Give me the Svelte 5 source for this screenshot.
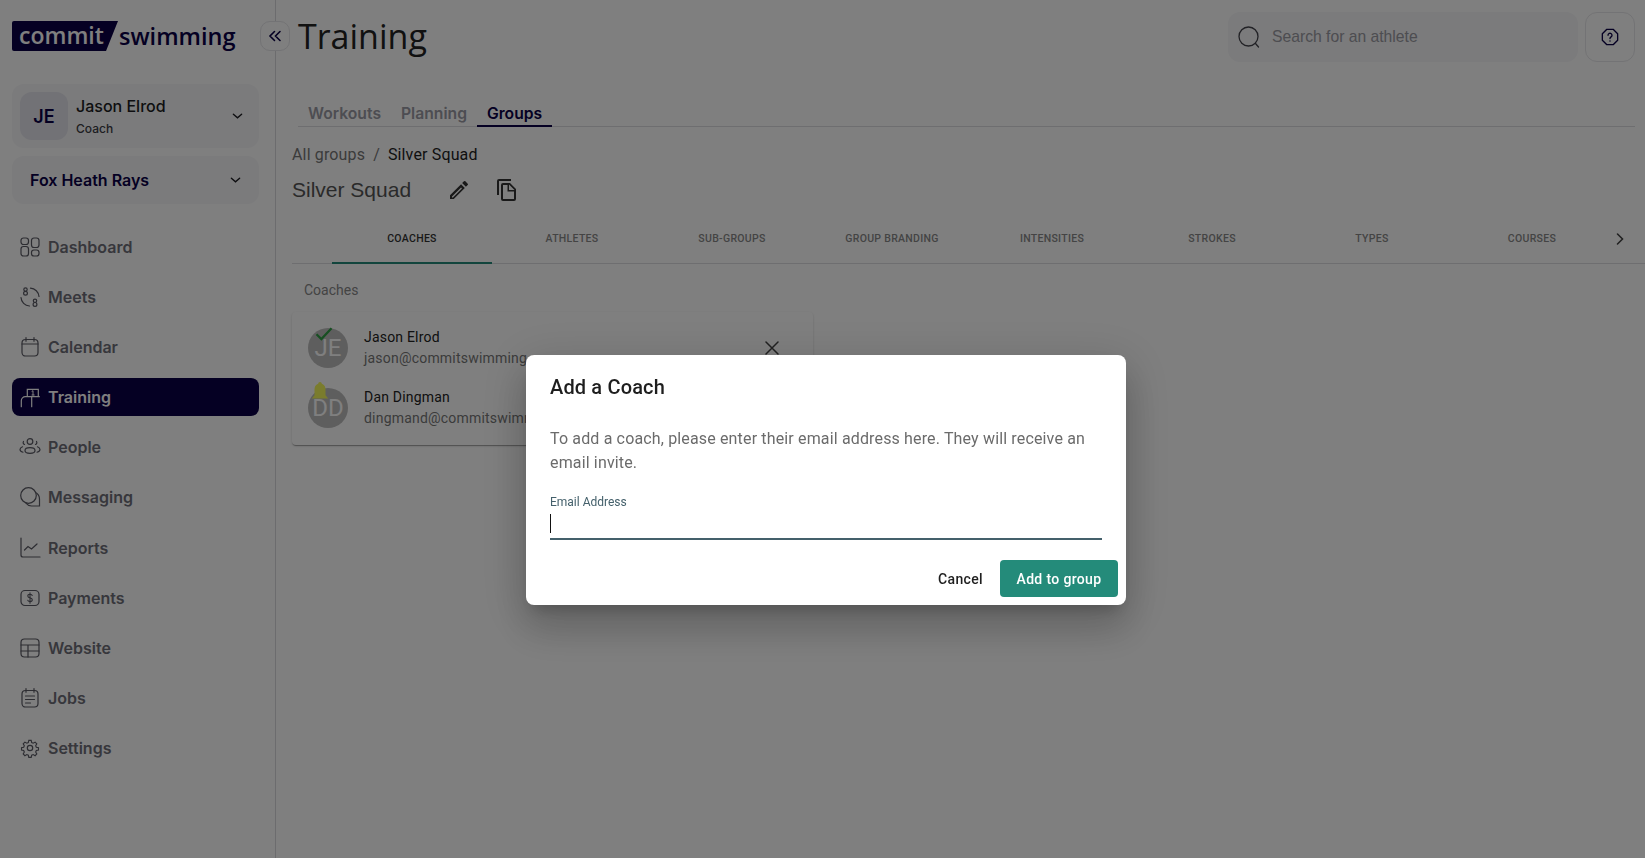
<script lang="ts">
	const icons: Record<string, string> = {
		dashboard:
			'<rect x="3" y="3" width="7.5" height="6.5" rx="2.5"/><rect x="13.5" y="3" width="7.5" height="9.5" rx="2.5"/><rect x="3" y="11.5" width="7.5" height="9.5" rx="2.5"/><rect x="13.5" y="15" width="7.5" height="6" rx="2.5"/>',
		meets:
			'<circle cx="7.5" cy="4.6" r="1.7"/><circle cx="7.5" cy="8.2" r="1.9"/><circle cx="17" cy="15.8" r="1.7"/><circle cx="17" cy="19.4" r="1.9"/><path d="M12.5 3.200a9 9 0 0 1 8.500 8.300M3 12.500a9 9 0 0 0 8.500 8.500"/>',
		calendar:
			'<rect x="4" y="4.500" width="16" height="16.500" rx="3.500"/><path d="M4 9h16M8 2.600v3.600M16 2.600v3.600"/>',
		training:
			'<path d="M9.300 11.700V4.300h11V11.700M3.300 21.700v-6a4 4 0 0 1 4-4H21.300M13.700 11.700V21.700"/><path d="M14 6.300l1-.6V10M14 10h2.200" stroke-width="1"/>',
		people:
			'<circle cx="12" cy="6.500" r="2.800"/><ellipse cx="12" cy="15.500" rx="5" ry="2.800"/><path d="M4.500 11.800C2.800 12.500 2 13.500 2 14.500s1 2.100 3 2.700M19.500 11.800c1.700.7 2.500 1.700 2.500 2.700s-1 2.100-3 2.700M6.500 9.500a2 2 0 0 1-1-3M17.500 9.500a2 2 0 0 0 1-3"/>',
		messaging:
			'<circle cx="10.500" cy="10.500" r="7.800"/><path d="M17.500 7.500A7.500 7.500 0 0 1 21.500 14v7h-8a7 7 0 0 1-5.500-2.800"/>',
		reports:
			'<path d="M3 2v17a2 2 0 0 0 2 2h17"/><path d="M6.500 14l3.500-3.500 3.500 2.500 5.500-5"/>',
		payments:
			'<rect x="3" y="4.500" width="18" height="15" rx="4"/><path d="M14.200 9.500a2.200 1.700 0 0 0-2.200-1.300c-1.300 0-2.200.7-2.200 1.800s1 1.600 2.200 1.900 2.300.8 2.300 1.900-1 1.800-2.300 1.800a2.300 1.700 0 0 1-2.300-1.400M12 6.800v10.400" stroke-width="1.100"/>',
		website:
			'<rect x="3" y="3" width="18" height="18" rx="3.500"/><path d="M3 9h18M3 15h18M10 9v12"/>',
		jobs:
			'<rect x="4" y="4.500" width="16" height="16.500" rx="3.500"/><path d="M8 2.600v3.600M16 2.600v3.600M7.500 10h9M7.500 13.500h9M7.500 17h5"/>',
		settings:
			'<circle cx="12" cy="12" r="2.700"/><path d="M10.500 2.500h3l.6 2.700 1.900.8 2.400-1.400 2.100 2.100-1.400 2.400.8 1.900 2.700.6v3l-2.700.6-.8 1.900 1.400 2.400-2.100 2.100-2.400-1.400-1.900.8-.6 2.700h-3l-.6-2.700-1.900-.8-2.400 1.400-2.100-2.100 1.400-2.400-.8-1.900-2.700-.6v-3l2.700-.6.8-1.900-1.400-2.400 2.100-2.100 2.400 1.400 1.900-.8z" transform="translate(2.400 2.400) scale(.8)" stroke-width="1.400"/>'
	};

	const nav = [
		{ label: 'Dashboard', icon: 'dashboard' },
		{ label: 'Meets', icon: 'meets' },
		{ label: 'Calendar', icon: 'calendar' },
		{ label: 'Training', icon: 'training', active: true },
		{ label: 'People', icon: 'people' },
		{ label: 'Messaging', icon: 'messaging' },
		{ label: 'Reports', icon: 'reports' },
		{ label: 'Payments', icon: 'payments' },
		{ label: 'Website', icon: 'website' },
		{ label: 'Jobs', icon: 'jobs' },
		{ label: 'Settings', icon: 'settings' }
	];

	const sections = ['Workouts', 'Planning', 'Groups'];
	const groupTabs = ['Coaches', 'Athletes', 'Sub-groups', 'Group branding', 'Intensities', 'Strokes', 'Types', 'Courses'];

	const coaches = [
		{ initials: 'JE', name: 'Jason Elrod', email: 'jason@commitswimming.com', badge: 'check' },
		{ initials: 'DD', name: 'Dan Dingman', email: 'dingmand@commitswimming.com', badge: 'bell' }
	];
</script>

<div class="app">
	<aside class="sidebar">
		<div class="logo">
			<span class="logo-box">commit</span>
			<span class="logo-word">swimming</span>
		</div>

		<button type="button" class="account">
			<span class="account-avatar">JE</span>
			<span class="account-text">
				<span class="account-name">Jason Elrod</span>
				<span class="account-role">Coach</span>
			</span>
			<svg class="chev" viewBox="0 0 12 8"><path d="M1.500 2l4.500 4 4.500-4" /></svg>
		</button>

		<button type="button" class="team">
			<span>Fox Heath Rays</span>
			<svg class="chev" viewBox="0 0 12 8"><path d="M1.500 2l4.500 4 4.500-4" /></svg>
		</button>

		<nav class="nav">
			{#each nav as item (item.label)}
				<div class="nav-item" class:active={item.active}>
					<svg class="nav-icon" viewBox="0 0 24 24">{@html icons[item.icon]}</svg>
					<span>{item.label}</span>
				</div>
			{/each}
		</nav>
	</aside>

	<main class="main">
		<button type="button" class="collapse" aria-label="Collapse">
			<svg viewBox="0 0 14 12"><path d="M6.500 1.500L2 6l4.500 4.500M12 1.500L7.500 6l4.500 4.500" /></svg>
		</button>

		<header class="topbar">
			<h1>Training</h1>
			<div class="search">
				<svg viewBox="0 0 24 24"><circle cx="11.500" cy="11.500" r="9.500" /><path d="M18.500 18.500l3 3.500" /></svg>
				<span>Search for an athlete</span>
			</div>
			<button type="button" class="help" aria-label="Help">
				<svg viewBox="0 0 20 20">
					<path d="M6.500 1.500h7l5 5v7l-5 5h-7l-5-5v-7z" stroke-linejoin="round" />
					<path d="M7.800 8a2.200 2.200 0 1 1 3.400 1.900c-.8.500-1.200 1-1.200 1.900" />
					<circle class="dot" cx="10" cy="14.500" r=".8" />
				</svg>
			</button>
		</header>

		<div class="sections">
			{#each sections as s}
				<span class="section" class:current={s === 'Groups'}>{s}</span>
			{/each}
		</div>

		<div class="crumbs">
			<span class="crumb-link">All groups</span>
			<span class="crumb-sep">/</span>
			<span class="crumb-here">Silver Squad</span>
		</div>

		<div class="group-title">
			<h2>Silver Squad</h2>
			<svg class="edit" viewBox="0 0 24 24">
				<path d="M3 17.250V21h3.750L17.810 9.940l-3.750-3.750L3 17.250zM5.920 19.500H5v-.920l9.060-9.060.920.920L5.920 19.500zM20.710 7.040a1 1 0 0 0 0-1.410l-2.340-2.340a1 1 0 0 0-1.410 0l-1.830 1.830 3.750 3.750 1.830-1.830z" />
			</svg>
			<svg class="copy" viewBox="0 0 24 24">
				<path d="M16 1H4a2 2 0 0 0-2 2v14h2V3h12V1zm-1 4l6 6v10a2 2 0 0 1-2 2H8a2 2 0 0 1-2-2V7a2 2 0 0 1 2-2h7zm-1 7h5.500L14 6.500V12zM8 7v14h11v-7.500h-6.500V7H8z" />
			</svg>
		</div>

		<div class="tabs">
			<div class="tab-list">
				{#each groupTabs as t, i}
					<span class="tab" class:selected={i === 0}>{t}</span>
				{/each}
			</div>
			<svg class="tab-next" viewBox="0 0 10 14"><path d="M2.500 2l5 5-5 5" /></svg>
		</div>

		<section class="panel">
			<p class="panel-label">Coaches</p>
			<div class="coach-card">
				{#each coaches as c (c.initials)}
					<div class="coach">
						<div class="coach-avatar">
							{c.initials}
							{#if c.badge === 'check'}
								<svg class="badge check" viewBox="0 0 24 24"><path d="M2 11l6.500 6.500L22 3" /></svg>
							{:else}
								<svg class="badge bell" viewBox="0 0 24 24">
									<path d="M12 1a2 2 0 0 1 2 2c3 1 4 3.500 4 6.500v6l3 3.500H3l3-3.500v-6c0-3 1-5.500 4-6.500a2 2 0 0 1 2-2z" />
								</svg>
							{/if}
						</div>
						<div class="coach-text">
							<span class="coach-name">{c.name}</span>
							<span class="coach-email">{c.email}</span>
						</div>
						<svg class="remove" viewBox="0 0 14 14"><path d="M1 1l12 12M13 1L1 13" /></svg>
					</div>
				{/each}
			</div>
		</section>
	</main>
</div>

<div class="backdrop">
	<div class="dialog" role="dialog" aria-labelledby="dialog-title">
		<h3 id="dialog-title">Add a Coach</h3>
		<p class="dialog-text">To add a coach, please enter their email address here. They will receive an email invite.</p>
		<label class="field">
			<span class="field-label">Email Address</span>
			<span class="field-input"><span class="caret"></span></span>
		</label>
		<div class="dialog-actions">
			<button type="button" class="btn-cancel">Cancel</button>
			<button type="button" class="btn-add">Add to group</button>
		</div>
	</div>
</div>

<style>
	:global(body) {
		background: #fff;
		font-family: Inter, 'Noto Sans', sans-serif;
		overflow: hidden;
	}

	button {
		font: inherit;
		letter-spacing: inherit;
		border: 0;
		background: none;
		padding: 0;
	}

	h1,
	h2,
	h3,
	p {
		margin: 0;
	}

	svg {
		display: block;
		fill: none;
		stroke: currentColor;
		stroke-linecap: round;
	}

	.app {
		display: flex;
		height: 858px;
		width: 1645px;
	}

	.sidebar {
		box-sizing: border-box;
		width: 276px;
		flex: none;
		padding: 21px 16px 0 12px;
		border-right: 1px solid #d8d8dc;
		background: #fefefe;
		display: flex;
		flex-direction: column;
	}

	.logo {
		display: flex;
		align-items: center;
		height: 30px;
		font-family: 'Open Sans', sans-serif;
		font-weight: 600;
		font-size: 23.500px;
		margin-bottom: 33px;
		color: #0a0046;
	}

	.logo-box {
		box-sizing: border-box;
		height: 30px;
		width: 106px;
		padding-left: 7px;
		font-size: 23px;
		line-height: 29px;
		color: #fff;
		background: #0a0046;
		border-radius: 2px 0 0 2px;
		clip-path: polygon(0 0, 100% 0, 88.700% 100%, 0 100%);
	}

	.logo-word {
		margin-left: 1px;
	}

	.account,
	.team {
		display: flex;
		align-items: center;
		box-sizing: border-box;
		width: 247px;
		background: #f6f6f8;
		border-radius: 12px;
		text-align: left;
	}

	.account {
		height: 64px;
		padding: 0 16px 0 8px;
		gap: 8px;
		margin-bottom: 8px;
	}

	.account-avatar {
		width: 48px;
		height: 48px;
		flex: none;
		display: grid;
		place-items: center;
		border-radius: 12px;
		background: #e4e4ec;
		color: #0a0046;
		font-size: 18px;
		font-weight: 600;
	}

	.account-text {
		flex: 1;
		display: flex;
		flex-direction: column;
		gap: 4px;
	}

	.account-name {
		font-size: 16px;
		font-weight: 500;
		line-height: 22px;
		color: #1d1d22;
	}

	.account-role {
		font-size: 12px;
		font-weight: 500;
		line-height: 16px;
		color: #3c3c44;
	}

	.chev {
		width: 11px;
		height: 8px;
		flex: none;
		stroke-width: 1.500;
		color: #1d1d22;
	}

	.team {
		height: 48px;
		padding: 0 18px 0 18px;
		justify-content: space-between;
		font-size: 16px;
		font-weight: 600;
		color: #0a0046;
		margin-bottom: 24px;
	}

	.nav {
		display: flex;
		flex-direction: column;
		gap: 12.100px;
	}

	.nav-item {
		display: flex;
		align-items: center;
		gap: 6px;
		height: 38px;
		padding-left: 6px;
		border-radius: 8px;
		font-size: 16px;
		font-weight: 600;
		color: #6f6f78;
	}

	.nav-item.active {
		background: #0a0046;
		color: #fff;
	}

	.nav-icon {
		width: 24px;
		height: 24px;
		stroke-width: 1.200;
		color: #5a5a64;
	}

	.nav-item.active .nav-icon {
		color: #fff;
	}

	.main {
		flex: 1;
		min-width: 0;
		position: relative;
		padding: 12px 10px 0 16px;
		display: flex;
		flex-direction: column;
		align-items: stretch;
	}

	.collapse {
		position: absolute;
		left: -16px;
		top: 21px;
		width: 30px;
		height: 30px;
		display: grid;
		place-items: center;
		border: 1px solid #e6e6ea;
		border-radius: 10px;
		background: #fff;
		color: #0a0046;
		box-sizing: border-box;
	}

	.collapse svg {
		width: 14px;
		height: 12px;
		stroke-width: 1.600;
	}

	.topbar {
		display: flex;
		align-items: center;
		height: 50px;
	}

	h1 {
		flex: 1;
		padding-left: 22px;
		margin-left: -16px;
		font-family: 'Open Sans', sans-serif;
		font-size: 34px;
		font-weight: 500;
		color: #222;
		line-height: 50px;
		margin-top: -3px;
	}

	.search {
		box-sizing: border-box;
		width: 350px;
		height: 50px;
		display: flex;
		align-items: center;
		gap: 11px;
		padding-left: 9px;
		background: #f6f6f8;
		border-radius: 12px;
		color: #9a9aa2;
		font-family: 'Liberation Sans', sans-serif;
		font-size: 15.700px;
		margin-right: 7px;
	}

	.search svg {
		width: 24px;
		height: 24px;
		stroke-width: 1.300;
		color: #44444c;
	}

	.help {
		box-sizing: border-box;
		width: 50px;
		height: 50px;
		display: grid;
		place-items: center;
		border: 1px solid #e6e6ea;
		border-radius: 12px;
		color: #0a0046;
	}

	.help svg {
		width: 18px;
		height: 18px;
		stroke-width: 1.500;
	}

	.help .dot {
		fill: currentColor;
		stroke: none;
	}

	.sections {
		display: flex;
		height: 39px;
		margin-top: 25px;
		margin-left: 6px;
		border-bottom: 1px solid #dcdce0;
		align-items: flex-end;
		font-size: 15.700px;
		font-weight: 600;
		color: #9a9aa4;
	}

	.section {
		padding: 0 10px;
		line-height: 25px;
	}

	.section.current {
		color: #0a0046;
		border-bottom: 2px solid #0a0046;
		line-height: 23px;
		margin-bottom: -1px;
	}

	.crumbs {
		margin-top: 16px;
		display: flex;
		gap: 8px;
		font-family: Roboto, sans-serif;
		font-size: 16px;
		line-height: 24px;
		letter-spacing: 0.15px;
		color: #777;
	}

	.crumb-here {
		color: #1e1e1e;
	}

	.group-title {
		display: flex;
		align-items: center;
		height: 36px;
		margin-top: 5px;
		color: #444;
	}

	h2 {
		width: 155px;
		font-family: 'Liberation Sans', sans-serif;
		font-size: 21px;
		font-weight: 400;
		color: #555;
	}

	.edit,
	.copy {
		fill: #333;
		stroke: none;
		width: 24px;
		height: 24px;
	}

	.copy {
		margin-left: 24px;
	}

	.tabs {
		display: flex;
		align-items: center;
		height: 48px;
		margin-top: 7px;
		margin-right: -10px;
		border-bottom: 1px solid #dcdce0;
	}

	.tab-list {
		display: flex;
		padding-left: 40px;
	}

	.tab {
		box-sizing: border-box;
		width: 160px;
		height: 48px;
		line-height: 47px;
		text-align: center;
		font-family: Roboto, sans-serif;
		font-size: 10.500px;
		font-weight: 500;
		letter-spacing: 0.3px;
		text-transform: uppercase;
		color: #888;
	}

	.tab.selected {
		color: #333;
		border-bottom: 2px solid #248b7a;
		margin-bottom: -1px;
		height: 49px;
	}

	.tab-next {
		width: 10px;
		height: 14px;
		margin-left: 3px;
		stroke-width: 1.600;
		color: #444;
	}

	.panel {
		font-family: Roboto, sans-serif;
	}

	.panel-label {
		margin-top: 16px;
		padding-left: 12px;
		font-size: 14px;
		line-height: 20px;
		color: #888;
	}

	.coach-card {
		box-sizing: border-box;
		width: 521px;
		height: 133px;
		margin-top: 12px;
		padding: 6px 16px;
		border-radius: 4px;
		background: #fff;
		box-shadow:
			0 2px 1px -1px rgba(0, 0, 0, 0.2),
			0 1px 1px rgba(0, 0, 0, 0.14),
			0 1px 3px rgba(0, 0, 0, 0.12);
	}

	.coach {
		display: flex;
		align-items: center;
		height: 60px;
		gap: 16px;
	}

	.coach-avatar {
		position: relative;
		width: 40px;
		height: 40px;
		flex: none;
		display: grid;
		place-items: center;
		border-radius: 50%;
		background: #bdbdbd;
		color: #fff;
		font-size: 24px;
	}

	.badge {
		position: absolute;
	}

	.check {
		left: 7px;
		top: -2px;
		width: 18px;
		height: 18px;
		stroke: #2f9e44;
		stroke-width: 3;
		stroke-linecap: butt;
	}

	.bell {
		left: 1px;
		top: -7px;
		width: 22px;
		height: 22px;
		stroke: none;
		fill: #f4f85a;
	}

	.coach-text {
		flex: 1;
		display: flex;
		flex-direction: column;
		font-size: 14px;
		line-height: 21px;
		letter-spacing: 0.2px;
	}

	.coach-name {
		color: #222;
	}

	.coach-email {
		color: #777;
	}

	.remove {
		width: 14px;
		height: 14px;
		stroke-width: 1.500;
		color: #444;
		margin-right: 18px;
	}

	.backdrop {
		position: fixed;
		inset: 0;
		background: rgba(0, 0, 0, 0.5);
	}

	.dialog {
		position: absolute;
		left: 526px;
		top: 355px;
		box-sizing: border-box;
		width: 600px;
		height: 250px;
		padding: 16px 24px 8px;
		display: flex;
		flex-direction: column;
		border-radius: 8px;
		background: #fff;
		font-family: Roboto, sans-serif;
		box-shadow:
			0 11px 15px -7px rgba(0, 0, 0, 0.2),
			0 24px 38px 3px rgba(0, 0, 0, 0.14),
			0 9px 46px 8px rgba(0, 0, 0, 0.12);
	}

	h3 {
		font-size: 20px;
		font-weight: 500;
		line-height: 32px;
		letter-spacing: 0.15px;
		color: #1e1e1e;
	}

	.dialog-text {
		margin-top: 24px;
		font-size: 16px;
		line-height: 24px;
		letter-spacing: 0.15px;
		color: #6b6b6b;
	}

	.field {
		display: block;
		margin-top: 19px;
	}

	.field-label {
		display: block;
		font-size: 12px;
		line-height: 16px;
		color: #44606b;
	}

	.field-input {
		display: block;
		height: 30px;
		border-bottom: 2px solid #44606b;
		box-sizing: border-box;
		padding-top: 4px;
		width: 552px;
	}

	.caret {
		display: block;
		width: 1px;
		height: 19px;
		background: #111;
	}

	.dialog-actions {
		display: flex;
		justify-content: flex-end;
		align-items: center;
		gap: 9px;
		margin: 20px -16px 0 0;
		font-size: 14px;
		font-weight: 500;
		letter-spacing: 0.35px;
	}

	.btn-cancel {
		padding: 0 8px;
		height: 37px;
		color: #1e1e1e;
	}

	.btn-add {
		width: 118px;
		height: 37px;
		border-radius: 4px;
		background: #248b7a;
		color: #fff;
	}
</style>
